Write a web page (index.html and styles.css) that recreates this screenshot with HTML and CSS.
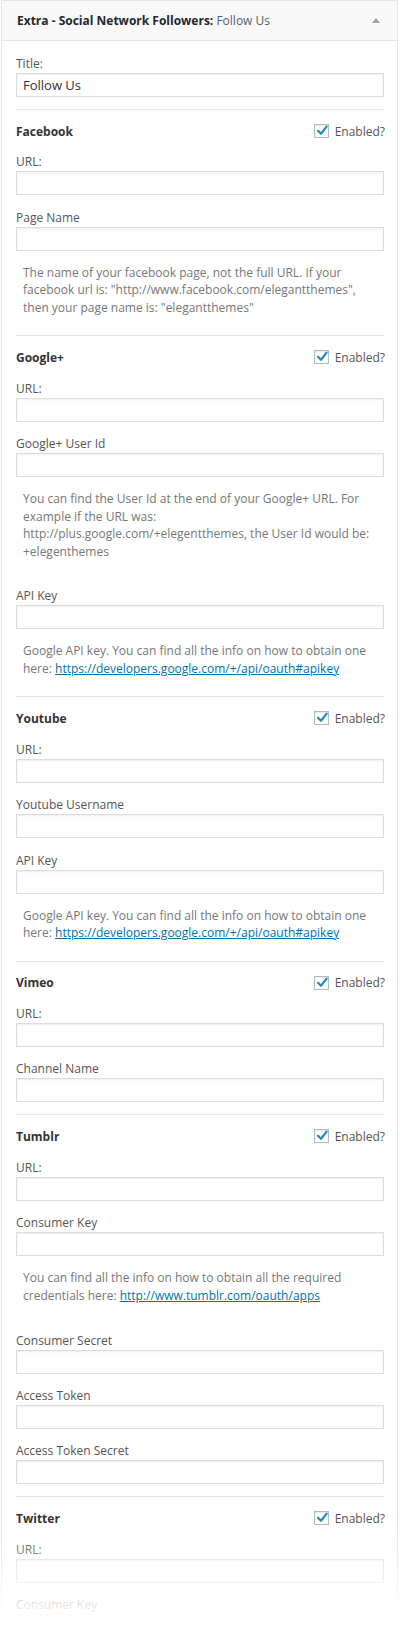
FILE: index.html
```html
<!DOCTYPE html>
<html lang="en">
<head>
<meta charset="utf-8">
<title>Extra - Social Network Followers</title>
<link rel="stylesheet" href="styles.css">
</head>
<body>
<div class="page">
  <div class="widget">
    <div class="widget-top">
      <h3 class="widget-title">Extra - Social Network Followers:<span class="in-title"> Follow Us</span></h3>
      <span class="toggle"></span>
    </div>
    <div class="widget-inside">
      <div class="field first">
        <label class="label">Title:</label>
        <input class="text title-input" type="text" value="Follow Us">
      </div>

      <section class="network">
        <div class="net-head"><span class="net-name">Facebook</span><span class="enabled"><span class="cb"><svg viewBox="0 0 14 14" width="14" height="14"><path d="M3 6.8 L6 9.8 L11.6 2.6" fill="none" stroke="#1e8cbe" stroke-width="2.2" stroke-linecap="round" stroke-linejoin="round"/></svg></span>Enabled?</span></div>
        <div class="field"><label class="label">URL:</label><input class="text" type="text"></div>
        <div class="field"><label class="label">Page Name</label><input class="text" type="text"></div>
        <p class="desc">The name of your facebook page, not the full URL. If your facebook url is: "http://www.facebook.com/elegantthemes", then your page name is: "elegantthemes"</p>
      </section>

      <section class="network">
        <div class="net-head"><span class="net-name">Google+</span><span class="enabled"><span class="cb"><svg viewBox="0 0 14 14" width="14" height="14"><path d="M3 6.8 L6 9.8 L11.6 2.6" fill="none" stroke="#1e8cbe" stroke-width="2.2" stroke-linecap="round" stroke-linejoin="round"/></svg></span>Enabled?</span></div>
        <div class="field"><label class="label">URL:</label><input class="text" type="text"></div>
        <div class="field"><label class="label">Google+ User Id</label><input class="text" type="text"></div>
        <p class="desc">You can find the User Id at the end of your Google+ URL. For example if the URL was: http://plus.google.com/+elegentthemes, the User Id would be: +elegenthemes</p>
        <div class="field"><label class="label">API Key</label><input class="text" type="text"></div>
        <p class="desc">Google API key. You can find all the info on how to obtain one here: <a href="#">https://developers.google.com/+/api/oauth#apikey</a></p>
      </section>

      <section class="network">
        <div class="net-head"><span class="net-name">Youtube</span><span class="enabled"><span class="cb"><svg viewBox="0 0 14 14" width="14" height="14"><path d="M3 6.8 L6 9.8 L11.6 2.6" fill="none" stroke="#1e8cbe" stroke-width="2.2" stroke-linecap="round" stroke-linejoin="round"/></svg></span>Enabled?</span></div>
        <div class="field"><label class="label">URL:</label><input class="text" type="text"></div>
        <div class="field"><label class="label">Youtube Username</label><input class="text" type="text"></div>
        <div class="field"><label class="label">API Key</label><input class="text" type="text"></div>
        <p class="desc">Google API key. You can find all the info on how to obtain one here: <a href="#">https://developers.google.com/+/api/oauth#apikey</a></p>
      </section>

      <section class="network">
        <div class="net-head"><span class="net-name">Vimeo</span><span class="enabled"><span class="cb"><svg viewBox="0 0 14 14" width="14" height="14"><path d="M3 6.8 L6 9.8 L11.6 2.6" fill="none" stroke="#1e8cbe" stroke-width="2.2" stroke-linecap="round" stroke-linejoin="round"/></svg></span>Enabled?</span></div>
        <div class="field"><label class="label">URL:</label><input class="text" type="text"></div>
        <div class="field"><label class="label">Channel Name</label><input class="text" type="text"></div>
      </section>

      <section class="network">
        <div class="net-head"><span class="net-name">Tumblr</span><span class="enabled"><span class="cb"><svg viewBox="0 0 14 14" width="14" height="14"><path d="M3 6.8 L6 9.8 L11.6 2.6" fill="none" stroke="#1e8cbe" stroke-width="2.2" stroke-linecap="round" stroke-linejoin="round"/></svg></span>Enabled?</span></div>
        <div class="field"><label class="label">URL:</label><input class="text" type="text"></div>
        <div class="field"><label class="label">Consumer Key</label><input class="text" type="text"></div>
        <p class="desc">You can find all the info on how to obtain all the required credentials here: <a href="#">http://www.tumblr.com/oauth/apps</a></p>
        <div class="field"><label class="label">Consumer Secret</label><input class="text" type="text"></div>
        <div class="field"><label class="label">Access Token</label><input class="text" type="text"></div>
        <div class="field"><label class="label">Access Token Secret</label><input class="text" type="text"></div>
      </section>

      <section class="network">
        <div class="net-head"><span class="net-name">Twitter</span><span class="enabled"><span class="cb"><svg viewBox="0 0 14 14" width="14" height="14"><path d="M3 6.8 L6 9.8 L11.6 2.6" fill="none" stroke="#1e8cbe" stroke-width="2.2" stroke-linecap="round" stroke-linejoin="round"/></svg></span>Enabled?</span></div>
        <div class="field"><label class="label">URL:</label><input class="text" type="text"></div>
        <div class="field"><label class="label">Consumer Key</label><input class="text" type="text"></div>
        <div class="field"><label class="label">Consumer Secret</label><input class="text" type="text"></div>
      </section>
    </div>
  </div>
  <div class="fade"></div>
</div>
</body>
</html>
```
FILE: styles.css
```css
html, body {
  margin: 0;
  padding: 0;
  background: #ffffff;
}

body {
  font-family: "Open Sans", "Liberation Sans", Arial, sans-serif;
  font-size: 12px;
  color: #555555;
}

.page {
  position: relative;
  width: 400px;
  height: 1634px;
  overflow: hidden;
}

.widget {
  margin: 0 2px 0 1px;
  border: 1px solid #e5e5e5;
  background: #ffffff;
  box-shadow: 0 1px 1px rgba(0, 0, 0, 0.04);
}

.widget-top {
  display: flex;
  align-items: center;
  justify-content: space-between;
  height: 39px;
  padding: 0 15px 0 15px;
  background: #f9f9f9;
  border-bottom: 1px solid #e5e5e5;
}

.widget-title {
  margin: 0;
  font-size: 12px;
  font-weight: 700;
  color: #23282d;
  line-height: 18px;
}

.in-title {
  font-weight: 400;
  color: #555d66;
}

.toggle {
  width: 0;
  height: 0;
  border-left: 4px solid transparent;
  border-right: 4px solid transparent;
  border-bottom: 5px solid #a0a5aa;
  margin-right: 2px;
  margin-top: -1px;
}

.widget-inside {
  display: flex;
  flex-direction: column;
  padding: 14px 13px 0 14px;
}

.field {
  display: flex;
  flex-direction: column;
  margin-top: 13.4px;
}

.field.first {
  margin-top: 0;
}

.label {
  display: block;
  line-height: 18px;
  color: #555555;
}

.text {
  display: block;
  box-sizing: border-box;
  width: 100%;
  height: 24px;
  margin: 0;
  padding: 0 6px;
  border: 1px solid #dddddd;
  background: #ffffff;
  box-shadow: inset 0 1px 2px rgba(0, 0, 0, 0.07);
  font-family: "Open Sans", "Liberation Sans", Arial, sans-serif;
  font-size: 13px;
  color: #333333;
  outline: none;
}

.network {
  display: flex;
  flex-direction: column;
  margin-top: 12px;
  padding-top: 12px;
  border-top: 1px solid #e5e5e5;
}

.net-head {
  display: flex;
  align-items: center;
  justify-content: space-between;
  height: 18px;
}

.net-name {
  font-weight: 700;
  color: #333333;
}

.enabled {
  display: flex;
  align-items: center;
  color: #555555;
  margin-right: -1px;
}

.cb {
  position: relative;
  box-sizing: border-box;
  width: 15px;
  height: 14px;
  margin-right: 6px;
  border: 1px solid #b4b9be;
  background: #ffffff;
  box-shadow: inset 0 1px 2px rgba(0, 0, 0, 0.1);
}

.cb svg {
  position: absolute;
  left: 0;
  top: -1px;
}

.desc {
  margin: 13px 0 14px 0;
  padding: 0 7px;
  line-height: 17.5px;
  color: #777777;
}

.desc:last-child {
  margin-bottom: 7px;
}

.desc a {
  color: #0073aa;
  text-decoration: underline;
}

.fade {
  position: absolute;
  left: 0;
  right: 0;
  top: 1528px;
  height: 106px;
  background: linear-gradient(to bottom, rgba(255, 255, 255, 0) 0%, rgba(255, 255, 255, 0.75) 65%, #ffffff 88%);
}
```
